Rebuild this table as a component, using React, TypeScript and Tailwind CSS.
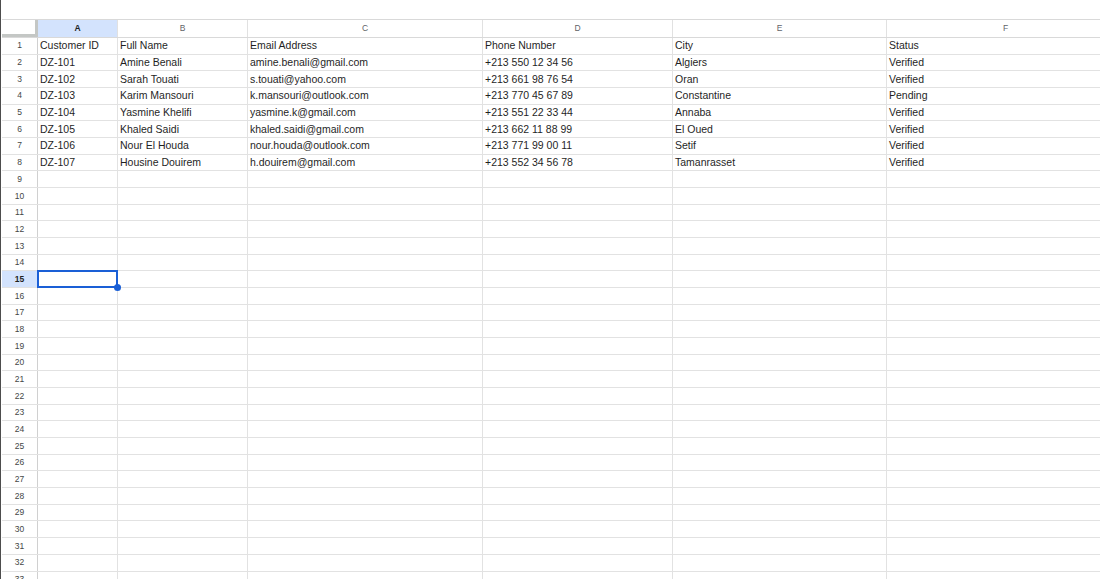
import React from "react";

const cols = [
  { key: "A", w: "w-[80px]" },
  { key: "B", w: "w-[130px]" },
  { key: "C", w: "w-[235px]" },
  { key: "D", w: "w-[190px]" },
  { key: "E", w: "w-[214px]" },
  { key: "F", w: "w-[238px]" },
];

const data: string[][] = [
  ["Customer ID", "Full Name", "Email Address", "Phone Number", "City", "Status"],
  ["DZ-101", "Amine Benali", "amine.benali@gmail.com", "+213 550 12 34 56", "Algiers", "Verified"],
  ["DZ-102", "Sarah Touati", "s.touati@yahoo.com", "+213 661 98 76 54", "Oran", "Verified"],
  ["DZ-103", "Karim Mansouri", "k.mansouri@outlook.com", "+213 770 45 67 89", "Constantine", "Pending"],
  ["DZ-104", "Yasmine Khelifi", "yasmine.k@gmail.com", "+213 551 22 33 44", "Annaba", "Verified"],
  ["DZ-105", "Khaled Saidi", "khaled.saidi@gmail.com", "+213 662 11 88 99", "El Oued", "Verified"],
  ["DZ-106", "Nour El Houda", "nour.houda@outlook.com", "+213 771 99 00 11", "Setif", "Verified"],
  ["DZ-107", "Housine Douirem", "h.douirem@gmail.com", "+213 552 34 56 78", "Tamanrasset", "Verified"],
];

const SELECTED_ROW = 15;
const TOTAL_ROWS = 33;

function HeaderRow() {
  return (
    <div className="flex h-[19px] shrink-0 border-t border-b border-[#d9d9d9]">
      <div className="w-[36px] shrink-0 border-r-[3px] border-b-[3px] border-[#c4c7c5] bg-white" />
      {cols.map((c) => (
        <div
          key={c.key}
          className={`${c.w} flex shrink-0 items-center justify-center border-r border-[#e1e1e1] text-[8.5px] ${
            c.key === "A" ? "bg-[#d3e3fd] font-bold text-[#1f1f1f]" : "bg-white text-[#5f6368]"
          }`}
        >
          {c.key}
        </div>
      ))}
    </div>
  );
}

function Row({ n }: { n: number }) {
  const cells = data[n - 1];
  const selected = n === SELECTED_ROW;
  return (
    <div className="flex h-[16.68px] shrink-0 border-b border-[#e2e2e2]">
      <div
        className={`flex w-[36px] shrink-0 items-center justify-center border-r border-[#d0d0d0] text-[8.5px] ${
          selected ? "bg-[#d3e3fd] font-bold text-[#1f1f1f]" : "bg-white text-[#444746]"
        }`}
      >
        {n}
      </div>
      {cols.map((c, i) => (
        <div
          key={c.key}
          className={`${c.w} relative flex shrink-0 items-center border-r border-[#e2e2e2] pl-[2px] text-[10.5px] text-[#1f1f1f]`}
        >
          <span className="whitespace-nowrap leading-[13px]">{cells ? cells[i] : ""}</span>
          {selected && c.key === "A" && (
            <>
              <div className="absolute -top-px -left-px bottom-[-1px] right-[-1px] z-10 border-2 border-[#1a5fd6]" />
              <div className="absolute -right-[4px] -bottom-[4px] z-20 h-[7px] w-[7px] rounded-full bg-[#1a5fd6]" />
            </>
          )}
        </div>
      ))}
    </div>
  );
}

export default function App() {
  return (
    <div
      className="h-[579px] w-[1100px] overflow-hidden border-l border-[#4d4d4d] bg-white"
      style={{ fontFamily: '"Liberation Sans", Arial, sans-serif' }}
    >
      <div className="h-[19px]" />
      <div className="flex flex-col pl-px">
        <HeaderRow />
        {Array.from({ length: TOTAL_ROWS }, (_, i) => (
          <Row key={i} n={i + 1} />
        ))}
      </div>
    </div>
  );
}
